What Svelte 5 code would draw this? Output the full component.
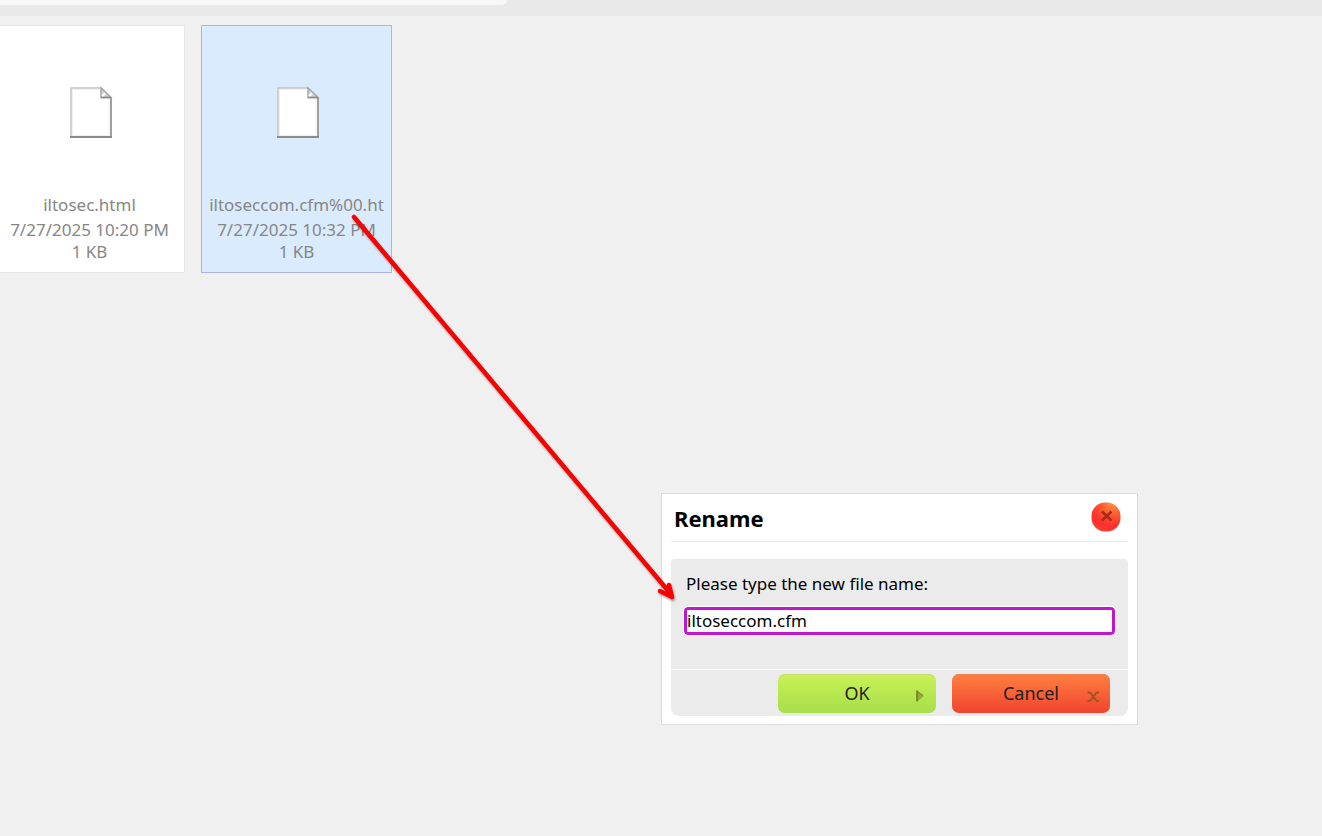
<script>
  let files = $state([
    { id: 1, name: 'iltosec.html', date: '7/27/2025 10:20 PM', size: '1 KB' },
    { id: 2, name: 'iltoseccom.cfm%00.ht', date: '7/27/2025 10:32 PM', size: '1 KB' }
  ])
  let selected = $state(2)
  let open = $state(true)
  let newName = $state('iltoseccom.cfm')

  function close() {
    open = false
  }

  function rename(e) {
    e.preventDefault()
    const file = files.find((f) => f.id === selected)
    if (file) file.name = newName
    close()
  }
</script>

<div class="browser">
  <div class="toolbar">
    <div class="tab"></div>
  </div>

  <div class="files">
    {#each files as file (file.id)}
      <button class="file" class:selected={file.id === selected} onclick={() => (selected = file.id)}>
        <svg class="file-icon" width="44" height="54" viewBox="0 0 44 54" aria-hidden="true">
          <path d="M2 2H32L42 11.5V51H2Z" fill="#fff" stroke="#c4c4c4" stroke-width="1.5" />
          <path d="M3.5 49V3.5H31" fill="none" stroke="#f0f0f0" />
          <path d="M40 12V49.5H3" fill="none" stroke="#f0f0f0" />
          <path d="M42 11V51" stroke="#a0a0a0" stroke-width="2" />
          <path d="M1 51H43" stroke="#8c8c8c" stroke-width="2" />
          <path d="M32 2V11.5H42Z" fill="#d4d4d4" stroke="#a8a8a8" stroke-width="1.5" />
          <path d="M33 10.5L36 7" stroke="#fff" stroke-width="2" />
          <path d="M32 11.5H42" stroke="#888" stroke-width="1.5" />
        </svg>
        <span class="name">{file.name}</span>
        <span class="info">{file.date}</span>
        <span class="info">{file.size}</span>
      </button>
    {/each}
  </div>

  {#if open}
    <div class="dialog" role="dialog" aria-labelledby="dialog-title">
      <header>
        <h2 id="dialog-title">Rename</h2>
        <button class="close" aria-label="Close" onclick={close}>
          <svg width="30" height="30" viewBox="0 0 30 30" aria-hidden="true">
            <defs>
              <radialGradient id="close-fill" cx="0.75" cy="0.02" r="1">
                <stop offset="0" stop-color="#ff9748" />
                <stop offset="0.4" stop-color="#ff5c2e" />
                <stop offset="0.8" stop-color="#fb302e" />
                <stop offset="1" stop-color="#fd3b2a" />
              </radialGradient>
            </defs>
            <rect x="0.5" y="0.5" width="29" height="29" rx="13.5" fill="url(#close-fill)" />
            <path d="M11 9.5L20.5 18.5M20.5 9.5L11 18.5" stroke="#a82a18" stroke-width="2.5" />
          </svg>
        </button>
      </header>
      <form onsubmit={rename}>
        <div class="body">
          <label for="new-name">Please type the new file name:</label>
          <input id="new-name" type="text" autocomplete="off" spellcheck="false" bind:value={newName} />
        </div>
        <footer>
          <button class="btn ok" type="submit">
            OK
            <svg class="mark" width="14" height="14" viewBox="0 0 14 14" aria-hidden="true">
              <path d="M5 1.5V12.5L12 7Z" fill="#98a83a" />
              <path d="M5 1.5V12.5" stroke="#6f7a20" stroke-width="1.5" />
              <path d="M5 2L11 6.5" stroke="#80852c" />
            </svg>
          </button>
          <button class="btn cancel" type="button" onclick={close}>
            Cancel
            <svg class="mark" width="14" height="14" viewBox="0 0 14 14" aria-hidden="true">
              <path d="M1.5 3.5H4L10.5 12H13M13 3.5H10.5L4 12H1.5" fill="none" stroke="#a8501e" stroke-width="2" />
            </svg>
          </button>
        </footer>
      </form>
    </div>
  {/if}

  <svg class="arrow" width="330" height="394" viewBox="0 0 330 394" aria-hidden="true">
    <g fill="none" stroke="#fb0000" stroke-linecap="round" stroke-linejoin="round">
      <path d="M4 5L320 381" stroke-width="4.5" />
      <path d="M310 379L322 385L319 373" stroke-width="4.5" />
    </g>
  </svg>
</div>

<style>
  :global(body) {
    background: #f0f0f0;
  }

  .browser {
    position: relative;
    min-height: 100vh;
    overflow: hidden;
    font-family: 'Noto Sans', sans-serif;
  }

  .toolbar {
    height: 16px;
    background: #e9e9e9;
  }

  .tab {
    width: 507px;
    height: 5px;
    background: #f8f8f8;
    border-bottom-right-radius: 6px;
  }

  .files {
    display: flex;
    gap: 16px;
    margin-left: -6px;
    padding-top: 9px;
  }

  .file {
    display: flex;
    flex-direction: column;
    align-items: center;
    box-sizing: border-box;
    width: 191px;
    padding: 60px 0 9px;
    border: 1px solid #e6e6e6;
    background: #fff;
    color: #868686;
    font-family: inherit;
    font-size: 17px;
    line-height: 22px;
    white-space: nowrap;
    cursor: pointer;
  }

  .file.selected {
    background: #dbebfe;
    border-color: #aeb2ec;
  }

  .file-icon {
    margin-left: 2px;
    margin-bottom: 51px;
  }

  .name {
    line-height: 28px;
  }

  .dialog {
    position: absolute;
    top: 493px;
    right: 184px;
    box-sizing: border-box;
    width: 477px;
    padding: 8px 9px;
    border: 1px solid #dbdbdb;
    background: #fff;
  }

  header {
    display: flex;
    align-items: flex-start;
    justify-content: space-between;
    height: 39px;
    margin-bottom: 17px;
    padding: 0 7px 0 3px;
    border-bottom: 1px solid #ececec;
  }

  h2 {
    margin: 0;
    font-size: 22px;
    line-height: 32px;
  }

  .close {
    display: flex;
    padding: 0;
    border: 0;
    background: none;
    cursor: pointer;
  }

  form {
    background: #ebebeb;
    border-radius: 4px 4px 8px 8px;
  }

  .body {
    display: flex;
    flex-direction: column;
    align-items: flex-start;
    padding: 12px 13px 34px;
    border-bottom: 1px solid #fff;
  }

  label {
    margin-bottom: 11px;
    padding-left: 2px;
    font-size: 17px;
    line-height: 25px;
  }

  input {
    box-sizing: border-box;
    width: 100%;
    height: 28px;
    padding: 0 0 1px;
    border: 3px solid #c314cf;
    border-radius: 4px;
    outline: 1px solid #fff;
    background: #fff;
    color: #000;
    font-family: inherit;
    font-size: 17px;
  }

  footer {
    display: flex;
    justify-content: flex-end;
    gap: 16px;
    padding: 4px 18px 3px;
  }

  .btn {
    position: relative;
    width: 158px;
    height: 39px;
    padding: 0 0 2px;
    border: 0;
    border-radius: 7px;
    color: #222;
    font-family: inherit;
    font-size: 18px;
    cursor: pointer;
  }

  .ok {
    background: linear-gradient(#caf257, #a6de4a);
    box-shadow: inset 0 1px #c3df70;
  }

  .cancel {
    background: linear-gradient(#ff8040, #f0432f);
    box-shadow: inset 0 1px #e78152;
  }

  .mark {
    position: absolute;
    right: 10px;
    bottom: 10px;
  }

  .arrow {
    position: absolute;
    top: 212px;
    left: 350px;
    filter: drop-shadow(1px 2px 1px rgba(0, 0, 0, 0.35));
    pointer-events: none;
  }
</style>
